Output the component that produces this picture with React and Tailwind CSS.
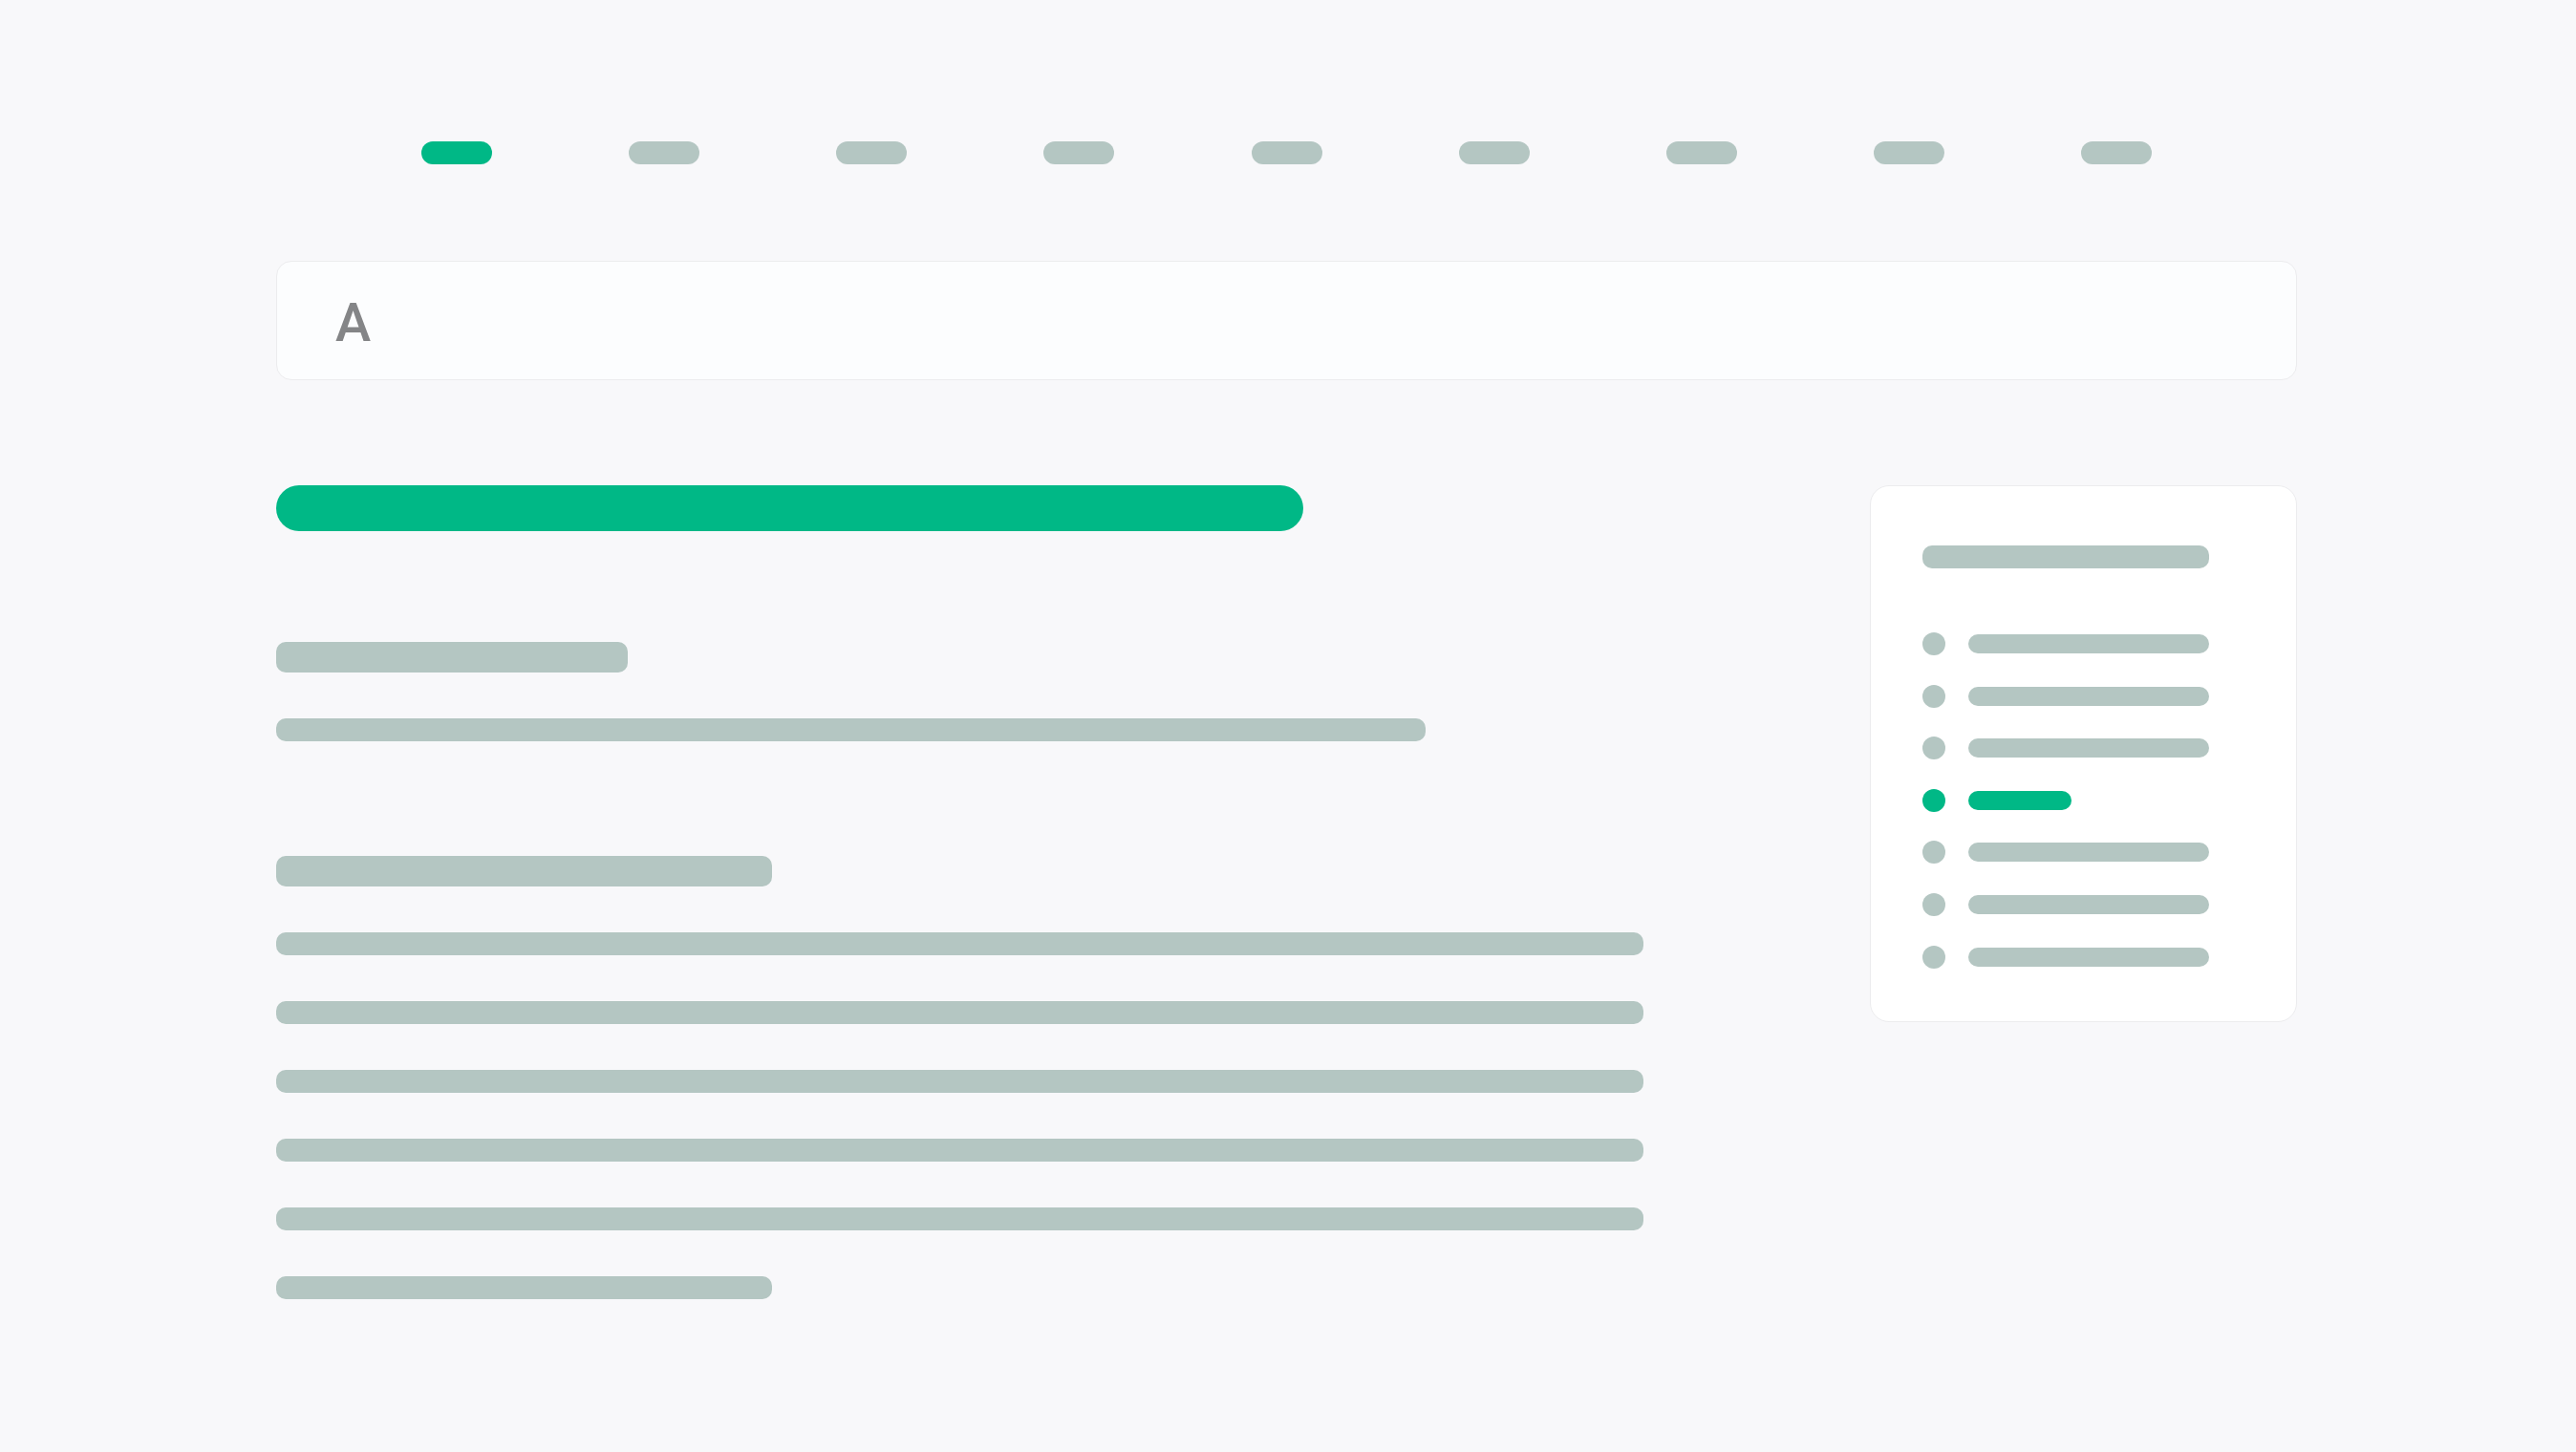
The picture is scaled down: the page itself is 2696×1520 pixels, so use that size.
import React from 'react';

const steps = [true, false, false, false, false, false, false, false, false];
const bodyLines = ['w-[1431px]', 'w-[1431px]', 'w-[1431px]', 'w-[1431px]', 'w-[1431px]', 'w-[519px]'];
const outline = [false, false, false, true, false, false, false];

const StepPills = () => (
    <div className="flex justify-between w-[1811px] ml-[152px]">
        {steps.map((active, i) => (
            <div key={i} className={`h-6 w-[74px] rounded-full ${active ? 'bg-[#00b886]' : 'bg-[#b4c6c2]'}`} />
        ))}
    </div>
);

const Outline = () => (
    <div className="w-[447px] h-[562px] shrink-0 rounded-[20px] border border-[#ececee] bg-white pl-[54px] pt-[62px]">
        <div className="h-6 w-[300px] rounded-[10px] bg-[#b4c6c2]" />
        <div className="mt-[67px] flex flex-col gap-[30.6px]">
            {outline.map((current, i) => (
                <div key={i} className="flex items-center h-6 gap-6">
                    <div className={`h-6 w-6 rounded-full ${current ? 'bg-[#00b886]' : 'bg-[#b4c6c2]'}`} />
                    <div className={`h-5 rounded-[10px] ${current ? 'w-[108px] bg-[#00b886]' : 'w-[252px] bg-[#b4c6c2]'}`} />
                </div>
            ))}
        </div>
    </div>
);

export default function App() {
    return (
        <div className="min-h-screen w-full bg-[#f8f8fa] pt-[148px]" style={{ fontFamily: '"Liberation Sans", Arial, sans-serif' }}>
            <div className="ml-[289px] w-[2115px]">
                <StepPills />

                {/* Answer box */}
                <div className="mt-[101px] h-[125px] flex items-center rounded-2xl border border-[#ececee] bg-[#fcfdfe] pl-[61px] pt-[4px]">
                    <span className="font-['Roboto',sans-serif] font-medium text-[56px] leading-none text-[#848587]">A</span>
                </div>

                <div className="mt-[110px] flex justify-between">
                    {/* Content */}
                    <div className="flex flex-col">
                        <div className="h-12 w-[1075px] rounded-full bg-[#00b886]" />
                        <div className="mt-[116px] h-8 w-[368px] rounded-[10px] bg-[#b4c6c2]" />
                        <div className="mt-12 h-6 w-[1203px] rounded-[10px] bg-[#b4c6c2]" />
                        <div className="mt-[120px] h-8 w-[519px] rounded-[10px] bg-[#b4c6c2]" />
                        <div className="mt-12 flex flex-col gap-12">
                            {bodyLines.map((w, i) => (
                                <div key={i} className={`h-6 ${w} rounded-[10px] bg-[#b4c6c2]`} />
                            ))}
                        </div>
                    </div>

                    <Outline />
                </div>
            </div>
        </div>
    );
}
